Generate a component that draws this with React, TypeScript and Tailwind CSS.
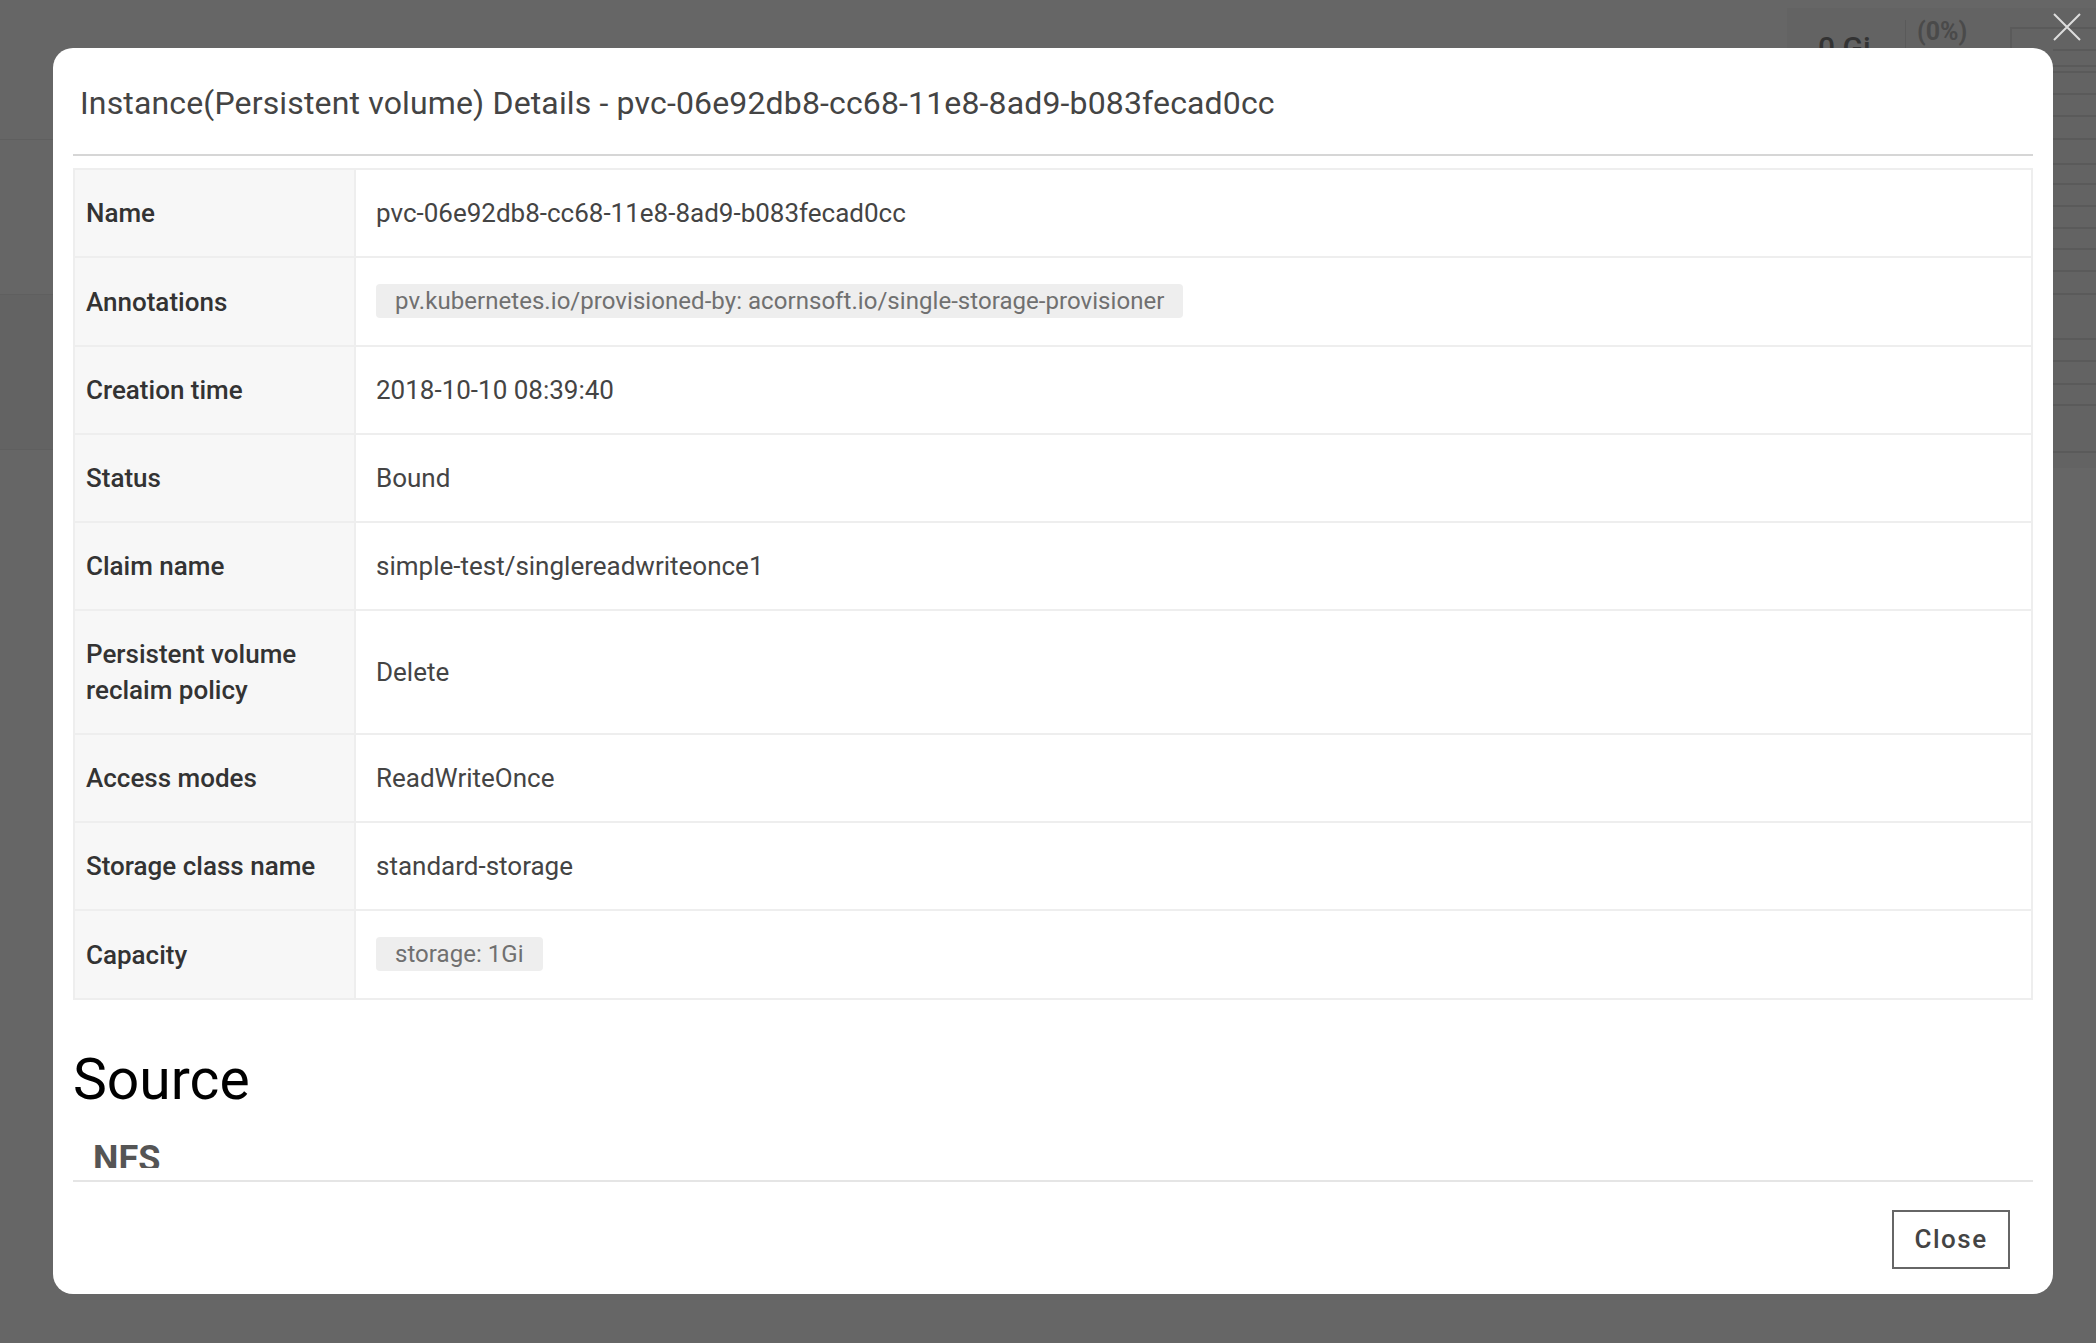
import React from 'react';

type Row = {
    label: string;
    value: string;
    badge?: boolean;
};

const rows: Row[] = [
    { label: 'Name', value: 'pvc-06e92db8-cc68-11e8-8ad9-b083fecad0cc' },
    { label: 'Annotations', value: 'pv.kubernetes.io/provisioned-by: acornsoft.io/single-storage-provisioner', badge: true },
    { label: 'Creation time', value: '2018-10-10 08:39:40' },
    { label: 'Status', value: 'Bound' },
    { label: 'Claim name', value: 'simple-test/singlereadwriteonce1' },
    { label: 'Persistent volume reclaim policy', value: 'Delete' },
    { label: 'Access modes', value: 'ReadWriteOnce' },
    { label: 'Storage class name', value: 'standard-storage' },
    { label: 'Capacity', value: 'storage: 1Gi', badge: true },
];

// faint rows of the page that sits behind the overlay
const sideLines = [49, 71, 93, 115, 138, 163, 183, 205, 227, 248, 270, 293, 338, 360, 383, 404, 451];

const Backdrop: React.FC = () => (
    <div className="absolute inset-0 bg-[#666666]">
        <div className="absolute left-0 right-0 top-[139px] h-px bg-[#5f5f5f]" />
        <div className="absolute left-0 right-0 top-[294px] h-[156px] border-y border-[#5f5f5f] bg-[#636363]" />

        {/* top right summary panel */}
        <div className="absolute left-[1787px] right-0 top-[8px] flex h-[460px] items-start overflow-hidden bg-[#636363]">
            <span className="ml-[31px] mt-[22px] w-[87px] shrink-0 text-[30px] font-medium leading-[36px] text-[#333333]">0 Gi</span>
            <div className="mt-[12px] h-[40px] w-px shrink-0 bg-[#5a5a5a]" />
            <span className="ml-[11px] mt-[9px] w-[93px] shrink-0 text-[25px] font-bold leading-[30px] text-[#4a4a4a]">(0%)</span>
            <div className="mt-[19px] h-[40px] w-[120px] shrink-0 border-2 border-[#5a5a5a]" />
        </div>
        {sideLines.map((y) => (
            <div key={y} className="absolute left-[2053px] right-0 h-[2px] bg-[#5a5a5a]" style={{ top: y }} />
        ))}
    </div>
);

export default function App() {
    return (
        <div className="relative h-[1343px] w-[2096px] overflow-hidden font-['Roboto','Liberation_Sans',sans-serif]">
            <Backdrop />

            {/* close X */}
            <button className="absolute left-[2052px] top-[12px] h-[30px] w-[30px]">
                <svg viewBox="0 0 30 30" className="h-[30px] w-[30px]">
                    <path d="M2 2 L28 28 M28 2 L2 28" stroke="#dddddd" strokeWidth="2" fill="none" />
                </svg>
            </button>

            <div className="relative pl-[53px] pt-[48px]">
                <div className="flex h-[1246px] w-[2000px] flex-col rounded-[20px] bg-white">
                    {/* header */}
                    <div className="px-[27px] pb-[32px] pt-[36px]">
                        <h2 className="text-[32px] leading-[38px] tracking-[0.15px] text-[#444444]">
                            Instance(Persistent volume) Details - pvc-06e92db8-cc68-11e8-8ad9-b083fecad0cc
                        </h2>
                    </div>
                    <div className="mx-[20px] h-[2px] bg-[#d6d6d6]" />

                    {/* body */}
                    <div className="px-[20px] pb-[12px] pt-[12px]">
                        <div className="h-[1000px] overflow-hidden">
                            <table className="w-full border-collapse border-2 border-[#eeeeee]">
                                <tbody>
                                    {rows.map((row) => (
                                        <tr key={row.label}>
                                            <td className="w-[281px] border-2 border-[#eeeeee] bg-[#f7f7f7] py-[25px] pl-[11px] pr-[13px] align-middle text-[26px] font-medium leading-[36px] text-[#333333]">
                                                {row.label}
                                            </td>
                                            <td className="border-2 border-[#eeeeee] px-[20px] py-[25px] align-middle text-[26px] leading-[36px] text-[#444444]">
                                                {row.badge ? (
                                                    <span className="relative top-[-2px] inline-block rounded-[4px] bg-[#eeeeee] px-[19px] align-middle text-[24px] leading-[34px] tracking-[0.05px] text-[#707070]">
                                                        {row.value}
                                                    </span>
                                                ) : (
                                                    row.value
                                                )}
                                            </td>
                                        </tr>
                                    ))}
                                </tbody>
                            </table>

                            <h1 className="mt-[46px] text-[57px] leading-[67px] text-black">Source</h1>
                            <h3 className="mt-[25px] pl-[20px] text-[36px] font-bold leading-[43px] text-[#555555]">NFS</h3>
                        </div>
                    </div>

                    {/* footer */}
                    <div className="mx-[20px] flex justify-end border-t-2 border-[#e5e5e5] pb-[25px] pr-[23px] pt-[28px]">
                        <button className="h-[59px] w-[118px] border-2 border-[#666666] text-[26px] font-medium tracking-[1.5px] text-[#444444]">
                            Close
                        </button>
                    </div>
                </div>
            </div>
        </div>
    );
}
